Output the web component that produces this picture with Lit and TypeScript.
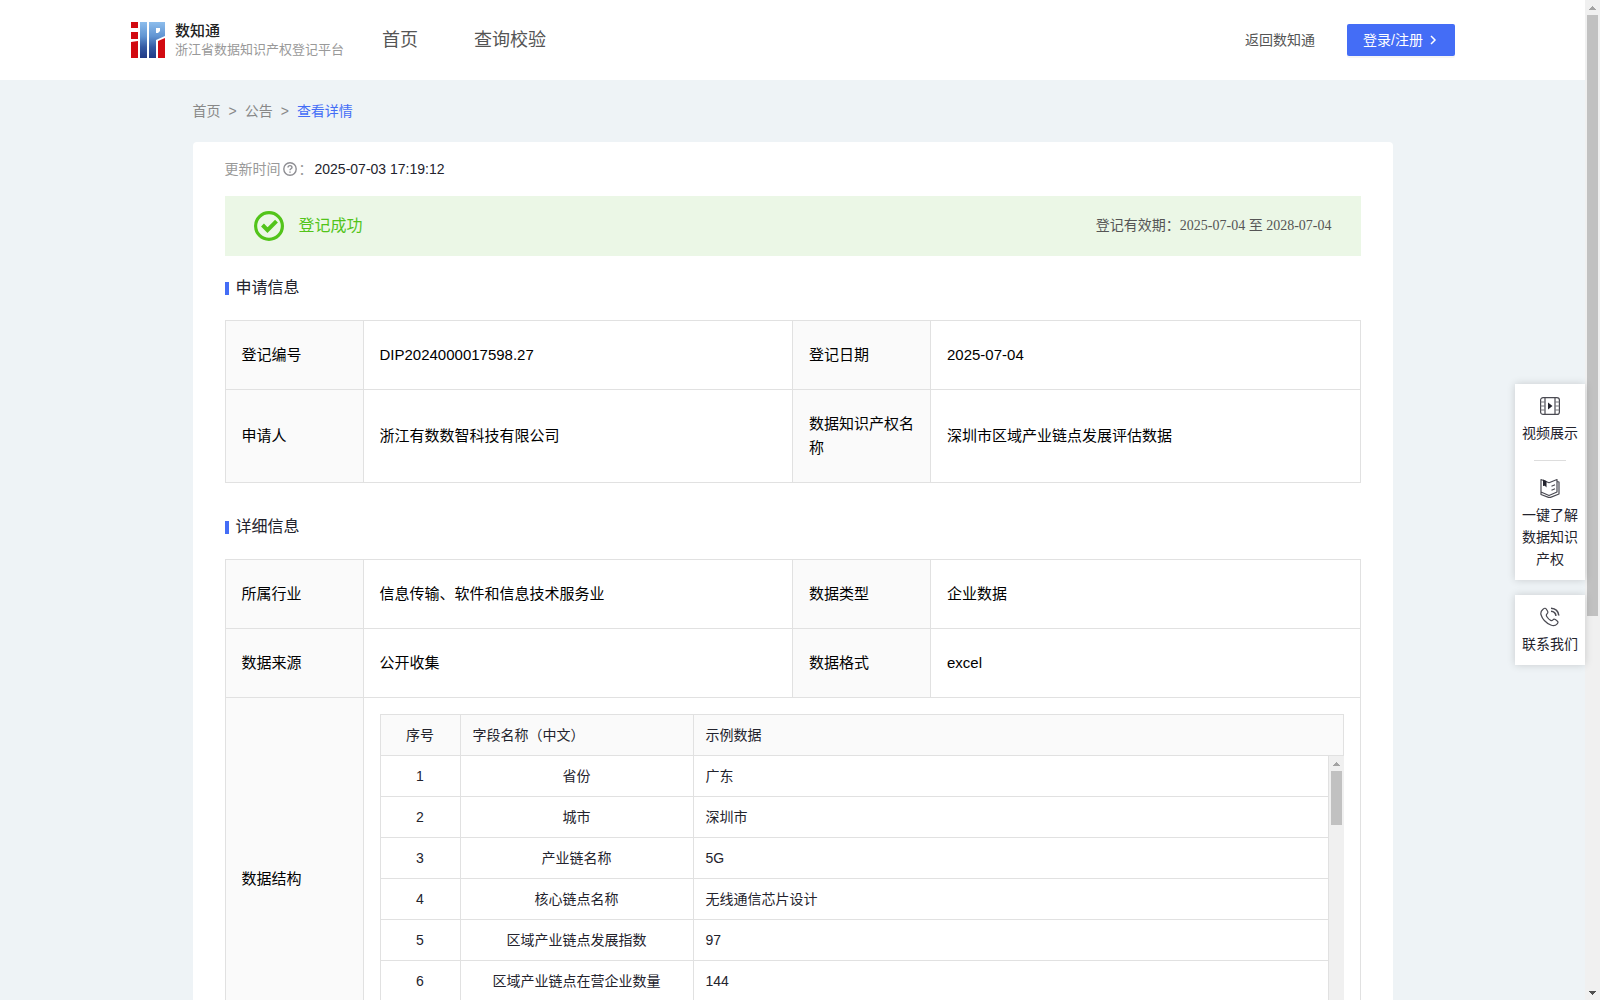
import { LitElement, html, css, svg } from "lit";
import { customElement, property } from "lit/decorators.js";

const FIELDS: [string, string][] = [
  ["省份", "广东"],
  ["城市", "深圳市"],
  ["产业链名称", "5G"],
  ["核心链点名称", "无线通信芯片设计"],
  ["区域产业链点发展指数", "97"],
  ["区域产业链点在营企业数量", "144"],
];

/** Classic vertical scroll bar with arrow buttons. */
@customElement("scroll-bar")
export class ScrollBar extends LitElement {
  @property({ type: Number }) ratio = 50;
  static styles = css`
    :host { display: flex; flex-direction: column; width: 15px; background: #f0f0f0; }
    .arrow { flex: none; height: 15px; display: flex; align-items: center; justify-content: center; }
    .track { flex: 1; min-height: 0; padding: 0 2px; }
    .thumb { background: #c1c1c1; }
    svg { display: block; }
  `;
  render() {
    return html`
      <div class="arrow"><svg width="7" height="4" shape-rendering="crispEdges"><path d="M3 0h1v1h1v1h1v1h1v1H0V3h1V2h1V1h1z" fill="#a3a3a3"/></svg></div>
      <div class="track"><div class="thumb" style="height:${this.ratio}%"></div></div>
      <div class="arrow"><svg width="7" height="4" shape-rendering="crispEdges"><path d="M0 0h7v1H6v1H5v1H4v1H3V3H2V2H1V1H0z" fill="#505050"/></svg></div>
    `;
  }
}

const logo = svg`
  <defs>
    <linearGradient id="blue" x1="0" y1="0" x2="0" y2="36" gradientUnits="userSpaceOnUse">
      <stop offset="0" stop-color="#8dbdec"/><stop offset=".4" stop-color="#6094d2"/>
      <stop offset=".7" stop-color="#3459a3"/><stop offset="1" stop-color="#213a85"/>
    </linearGradient>
  </defs>
  <path d="M0 0h7v6H0zM0 10h7v7H0V10zM0 20l7-1v17H0zM27 19l7-3v20h-7z" fill="#d20a11"/>
  <path d="M9 0h7v36H9zM18 0h16v14l-9 4v18h-7zM25 6v5h2l2-2V6z" fill="url(#blue)" fill-rule="evenodd"/>
`;

@customElement("app-root")
export class AppRoot extends LitElement {
  static styles = css`
    :host {
      display: flex; position: relative; height: 100vh; overflow: hidden;
      background: #eef3f6; color: #23232d;
      font: 14px/22px "Liberation Sans", "Noto Sans CJK SC", sans-serif;
    }
    * { box-sizing: border-box; }
    a { color: inherit; text-decoration: none; }
    svg { display: block; flex: none; }
    .page { flex: 1; min-width: 0; overflow-y: auto; scrollbar-width: none; }
    .header { display: flex; align-items: center; height: 80px; padding: 0 130px 0 131px; background: #fff; color: #555; }
    .brand { display: flex; align-items: center; gap: 10px; }
    .name { margin: 0; font-size: 15px; line-height: 20px; font-weight: 500; color: #222; }
    .sub { margin: 0; font-size: 13px; line-height: 18px; color: #999; }
    .nav { display: flex; gap: 56px; margin-left: 38px; font-size: 18px; line-height: 26px; }
    .account { display: flex; align-items: center; gap: 32px; margin-left: auto; }
    .login {
      display: flex; align-items: center; gap: 6px; height: 32px; padding: 0 18px 0 16px; border: 0; border-radius: 2px;
      background: #446df6; color: #fff; font: inherit; box-shadow: 0 2px 0 rgba(0, 0, 0, .04);
    }
    .main { max-width: 1200px; margin: 0 auto; padding-bottom: 40px; }
    .crumbs { display: flex; gap: 8px; padding: 20px 0; color: #888; }
    .current { color: #446df6; }
    .card { padding: 16px 32px 32px; background: #fff; border-radius: 4px; }
    .updated { display: flex; align-items: center; margin: 0; color: #999; }
    .stamp { padding-left: 2px; color: #23232d; }
    .banner {
      display: flex; align-items: center; gap: 15px; height: 60px; margin-top: 16px; padding: 0 29px;
      background: #ebf7e6; color: #52c41a; font-size: 16px;
    }
    .validity { margin-left: auto; color: #555; font: 14px/22px "Liberation Serif", "Noto Sans CJK SC", serif; }
    .title { display: flex; align-items: center; gap: 7px; margin: 20px 0; font-size: 16px; line-height: 24px; font-weight: 400; }
    .title::before { content: ""; width: 4px; height: 13px; background: #446df6; }
    .info { width: 100%; margin-bottom: 32px; border-collapse: collapse; table-layout: fixed; font-size: 15px; line-height: 24px; color: #000; }
    .info > tbody > tr > th, .info > tbody > tr > td { padding: 22px 16px; border: 1px solid #e1e1e1; font-weight: 400; text-align: left; }
    .info > tbody > tr > th { background: #fafafa; }
    .info > tbody > tr > td.nested { padding: 16px; }
    .key { width: 138px; }
    .fields { width: 100%; border-collapse: separate; border-spacing: 0; table-layout: fixed; font-size: 14px; line-height: 22px; color: #23232d; }
    .fields th, .fields td { height: 41px; padding: 0 12px; border: solid #e1e1e1; border-width: 0 1px 1px 0; font-weight: 400; text-align: left; }
    .fields th { height: 42px; border-top-width: 1px; background: #fafafa; }
    .fields th:first-child, .fields td:first-child { border-left-width: 1px; }
    .fields .mid { text-align: center; }
    .no { width: 81px; }
    .label { width: 233px; }
    .body { display: flex; height: 288px; overflow: hidden; }
    .rows { flex: 1; min-width: 0; overflow: hidden; }
    .side { position: absolute; right: 15px; top: 384px; display: flex; flex-direction: column; gap: 15px; width: 70px; text-align: center; }
    .box { display: flex; flex-direction: column; align-items: center; padding: 12px 7px 10px; background: #fff; box-shadow: 0 0 8px rgba(0, 0, 0, .16); }
    .tool { display: flex; flex-direction: column; align-items: center; gap: 6px; }
    .rule { width: 32px; height: 1px; margin: 16px 0 17px; border: 0; background: #ddd; }
  `;

  private columns() {
    return html`<colgroup><col class="no" /><col class="label" /><col /></colgroup>`;
  }

  private keys() {
    return html`<colgroup><col class="key" /><col /><col class="key" /><col /></colgroup>`;
  }

  render() {
    return html`
      <div class="page">
        <header class="header">
          <a class="brand" href="#">
            <svg width="34" height="36" viewBox="0 0 34 36">${logo}</svg>
            <div><p class="name">数知通</p><p class="sub">浙江省数据知识产权登记平台</p></div>
          </a>
          <nav class="nav"><a href="#">首页</a><a href="#">查询校验</a></nav>
          <div class="account">
            <a href="#">返回数知通</a>
            <button class="login" type="button">登录/注册
              <svg width="8" height="10" viewBox="0 0 8 10" fill="none" stroke="#fff" stroke-width="1.5"><path d="M2 1l4 4-4 4"/></svg>
            </button>
          </div>
        </header>
        <main class="main">
          <nav class="crumbs"><a href="#">首页</a><span>&gt;</span><a href="#">公告</a><span>&gt;</span><a class="current" href="#">查看详情</a></nav>
          <section class="card">
            <p class="updated">更新时间
              <svg width="18" height="14" viewBox="0 0 18 14" fill="none" stroke="#8e8e93" stroke-width="1.4"><circle cx="9" cy="7" r="6.200"/><path d="M7 5.6c0-1.300.8-2 2-2s2 .8 2 1.800c0 1.400-2 1.400-2 2.900M9 9.400v1.300"/></svg>：<span class="stamp">2025-07-03 17:19:12</span></p>
            <div class="banner">
              <svg width="30" height="30" viewBox="0 0 30 30" fill="none" stroke="#52c41a"><circle cx="15" cy="15" r="13.400" stroke-width="3.200"/><path d="M8.500 14l5 5.200 9-9" stroke-width="4"/></svg>
              <span>登记成功</span>
              <span class="validity">登记有效期：2025-07-04 至 2028-07-04</span>
            </div>
            <h2 class="title">申请信息</h2>
            <table class="info">
              ${this.keys()}
              <tbody>
                <tr><th>登记编号</th><td>DIP2024000017598.27</td><th>登记日期</th><td>2025-07-04</td></tr>
                <tr><th>申请人</th><td>浙江有数数智科技有限公司</td><th>数据知识产权名称</th><td>深圳市区域产业链点发展评估数据</td></tr>
              </tbody>
            </table>
            <h2 class="title">详细信息</h2>
            <table class="info">
              ${this.keys()}
              <tbody>
                <tr><th>所属行业</th><td>信息传输、软件和信息技术服务业</td><th>数据类型</th><td>企业数据</td></tr>
                <tr><th>数据来源</th><td>公开收集</td><th>数据格式</th><td>excel</td></tr>
                <tr>
                  <th>数据结构</th>
                  <td class="nested" colspan="3">
                    <table class="fields">
                      ${this.columns()}
                      <thead><tr><th class="mid">序号</th><th>字段名称（中文）</th><th>示例数据</th></tr></thead>
                    </table>
                    <div class="body">
                      <div class="rows">
                        <table class="fields">
                          ${this.columns()}
                          <tbody>
                            ${FIELDS.map(([name, sample], i) => html`<tr><td class="mid">${i + 1}</td><td class="mid">${name}</td><td>${sample}</td></tr>`)}
                          </tbody>
                        </table>
                      </div>
                      <scroll-bar .ratio=${21}></scroll-bar>
                    </div>
                  </td>
                </tr>
              </tbody>
            </table>
          </section>
        </main>
      </div>
      <scroll-bar .ratio=${62}></scroll-bar>
      <aside class="side">
        <div class="box">
          <a class="tool" href="#">
            <svg width="20" height="20" viewBox="0 0 20 20" fill="none" stroke="#4a4a52" stroke-width="1.2"><rect x=".6" y="1.600" width="18.800" height="16.800" rx="2.500"/><path d="M5 1.600v16.800M15 1.600v16.800"/><path d="M.6 6H5M.6 10H5M.6 14H5M15 6h4.400M15 10h4.400M15 14h4.400" stroke="#77777d"/><path d="M8 6.500v7l4.500-3.500z" fill="#23232d" stroke="none"/></svg>
            视频展示
          </a>
          <hr class="rule" />
          <a class="tool" href="#">
            <svg width="20" height="20" viewBox="0 0 20 20" fill="none" stroke="#4a4a52" stroke-width="1.2" stroke-linejoin="round"><path d="M1 1.500l8 3.200 8-3.200v12.500l-8 3.500-8-3.500zM17 3.500l2 .5v12l-8.500 3.400h-2L1 16.500V14M11.500 8.300l3.500-1.500M11.500 12.300l3.500-1.500"/><path d="M3 1.500l3.500 1.500v6.500L4.800 7.800 3 8z" fill="#23232d" stroke="none"/></svg>
            一键了解数据知识产权
          </a>
        </div>
        <div class="box">
          <a class="tool" href="#">
            <svg width="20" height="20" viewBox="0 0 20 20" fill="none" stroke="#4a4a52" stroke-width="1.2"><path d="M3 2.300c1.500-1.500 2.600-1.300 3.400 0l1.200 2c.6 1.200.3 1.900-.7 2.700-.9.800-.8 1.500 0 2.800 1 1.600 2.300 2.900 3.800 3.600 1 .5 1.500.3 2.200-.5.700-.9 1.600-.9 2.500-.3l1.800 1.300c1.100.8 1 1.800 0 2.900-1.600 1.800-3.700 2.300-6.400 1.200C5.800 15.900 2.300 12 1 7.800.4 5.600 1.200 3.800 3 2.300z"/><path d="M11 1.200c4.300.2 7.300 3 7.800 7.300M11 4.200c2.700.2 4.600 2 5 4.600" stroke-width="1.600"/></svg>
            联系我们
          </a>
        </div>
      </aside>
    `;
  }
}
